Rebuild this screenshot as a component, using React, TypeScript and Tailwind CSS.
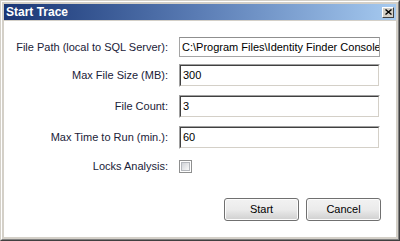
import React from "react";

const font = { fontFamily: '"Liberation Sans", Arial, sans-serif' };

function Label({ children }: { children: React.ReactNode }) {
  return (
    <div className="w-[164px] shrink-0 text-right text-[11px] leading-none text-[#1a2238]">
      {children}
    </div>
  );
}

function SunkenInput({ value }: { value: string }) {
  return (
    <div className="w-[201px] h-[23px] border border-t-[#a0a0a0] border-l-[#a0a0a0] border-r-white border-b-white">
      <div className="w-full h-full border border-t-[#404040] border-l-[#404040] border-r-[#d4d0c8] border-b-[#d4d0c8] bg-white flex items-center pl-[2px] text-[11px] text-black overflow-hidden whitespace-nowrap">
        {value}
      </div>
    </div>
  );
}

function Btn({ children }: { children: React.ReactNode }) {
  return (
    <div className="w-[75px] h-[23px] rounded-[3px] border border-[#707070] bg-gradient-to-b from-[#f2f2f2] via-[#ebebeb] to-[#cfcfcf] flex items-center justify-center text-[11px] text-black shadow-[inset_0_0_0_1px_#fcfcfc]">
      {children}
    </div>
  );
}

export default function App() {
  return (
    <div style={font} className="w-[400px] h-[241px] bg-[#d4d0c8] border border-t-[#d4d0c8] border-l-[#d4d0c8] border-r-[#404040] border-b-[#404040] overflow-hidden">
      <div className="w-full h-full border border-t-white border-l-white border-r-[#808080] border-b-[#808080] p-[2px] flex flex-col">
        {/* Title bar */}
        <div className="h-[16px] shrink-0 bg-gradient-to-r from-[#1a3675] via-[#5b7db5] to-[#a6caf0] flex items-center justify-between pl-[2px] pr-[2px]">
          <span className="text-white font-bold text-[12px] leading-none">Start Trace</span>
          <div className="w-[12px] h-[11px] bg-[#d4d0c8] border border-t-white border-l-white border-r-[#404040] border-b-[#404040] flex items-center justify-center">
            <svg width="7" height="6" viewBox="0 0 7 6">
              <path d="M0.5 0.5 L6.5 5.5 M6.5 0.5 L0.5 5.5" stroke="#000" strokeWidth="1.4" />
            </svg>
          </div>
        </div>
        {/* Content */}
        <div className="flex-1 bg-white mt-[1px] flex flex-col pt-[16px]">
          <div className="flex items-center gap-[11px] h-[20px]">
            <Label>File Path (local to SQL Server):</Label>
            <div className="w-[201px] h-[20px] border border-[#a5a5a5] border-t-[#8f8f8f] bg-white flex items-center pl-[2px] text-[11px] text-black overflow-hidden whitespace-nowrap">
              C:\Program Files\Identity Finder Console
            </div>
          </div>
          <div className="flex items-center gap-[11px] mt-[7px]">
            <Label>Max File Size (MB):</Label>
            <SunkenInput value="300" />
          </div>
          <div className="flex items-center gap-[11px] mt-[8px]">
            <Label>File Count:</Label>
            <SunkenInput value="3" />
          </div>
          <div className="flex items-center gap-[11px] mt-[8px]">
            <Label>Max Time to Run (min.):</Label>
            <SunkenInput value="60" />
          </div>
          <div className="flex items-center gap-[11px] mt-[11px] h-[13px]">
            <Label>Locks Analysis:</Label>
            <div className="w-[13px] h-[13px] border border-[#8e8f8f] bg-white p-[1px]">
              <div className="w-full h-full border border-[#b5b8bd] bg-gradient-to-br from-[#d0d3d8] to-[#fafafa]" />
            </div>
          </div>
          <div className="flex justify-end gap-[7px] pr-[15px] mt-[25px]">
            <Btn>Start</Btn>
            <Btn>Cancel</Btn>
          </div>
        </div>
      </div>
    </div>
  );
}
